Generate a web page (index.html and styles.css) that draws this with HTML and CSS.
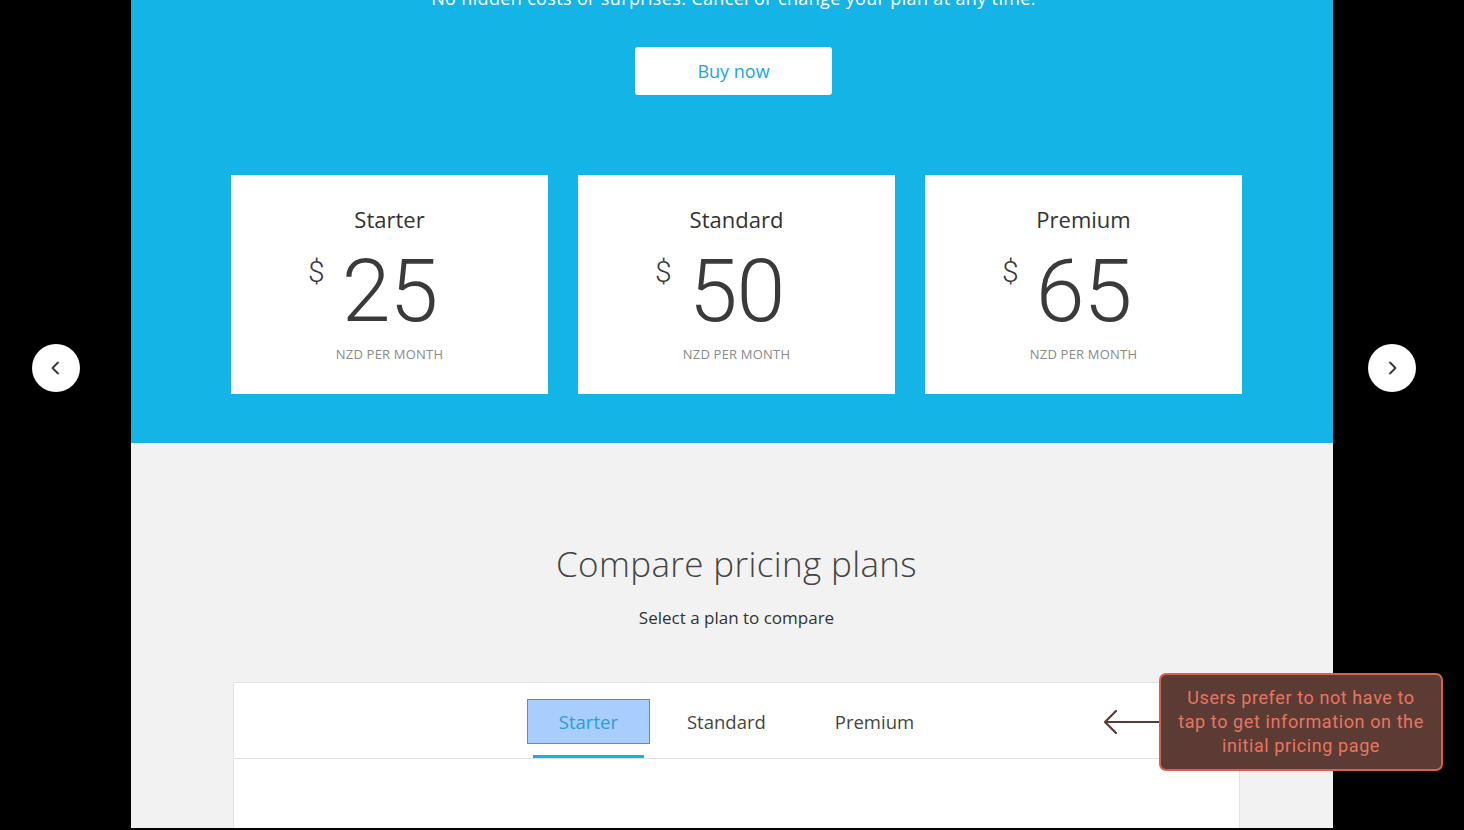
FILE: index.html
```html
<!DOCTYPE html>
<html lang="en">
<head>
<meta charset="utf-8">
<title>Pricing</title>
<link rel="stylesheet" href="styles.css">
</head>
<body>
<div class="frame">
  <div class="side side-left">
    <button class="nav-btn" aria-label="Previous">
      <svg width="16" height="16" viewBox="0 0 16 16"><path d="M10 2.5 L4.5 8 L10 13.5" fill="none" stroke="#333" stroke-width="1.8" stroke-linecap="round" stroke-linejoin="round"/></svg>
    </button>
  </div>

  <main class="page">
    <section class="hero">
      <p class="hero-text">No hidden costs or surprises. Cancel or change your plan at any time.</p>
      <a class="buy-btn" href="#">Buy now</a>
      <div class="plans">
        <div class="plan">
          <div class="plan-name">Starter</div>
          <div class="plan-price"><span class="amount"><span class="currency">$</span>25</span></div>
          <div class="plan-unit">NZD PER MONTH</div>
        </div>
        <div class="plan">
          <div class="plan-name">Standard</div>
          <div class="plan-price"><span class="amount"><span class="currency">$</span>50</span></div>
          <div class="plan-unit">NZD PER MONTH</div>
        </div>
        <div class="plan">
          <div class="plan-name">Premium</div>
          <div class="plan-price"><span class="amount"><span class="currency">$</span>65</span></div>
          <div class="plan-unit">NZD PER MONTH</div>
        </div>
      </div>
    </section>

    <section class="compare">
      <h2 class="compare-title">Compare pricing plans</h2>
      <p class="compare-sub">Select a plan to compare</p>
      <div class="compare-card">
        <div class="tabs">
          <div class="tab active"><span class="tab-label">Starter</span><span class="tab-bar"></span></div>
          <div class="tab"><span class="tab-label">Standard</span><span class="tab-bar"></span></div>
          <div class="tab"><span class="tab-label">Premium</span><span class="tab-bar"></span></div>
        </div>
        <div class="compare-body"></div>
      </div>
    </section>
  </main>

  <div class="side side-right">
    <button class="nav-btn" aria-label="Next">
      <svg width="16" height="16" viewBox="0 0 16 16"><path d="M6 2.5 L11.5 8 L6 13.5" fill="none" stroke="#333" stroke-width="1.8" stroke-linecap="round" stroke-linejoin="round"/></svg>
    </button>
  </div>

  <div class="note">
    <svg class="note-arrow" width="58" height="26" viewBox="0 0 58 26"><path d="M2 13 H57 M13 2 L2 13 L13 24" fill="none" stroke="#5b3a33" stroke-width="2.2" stroke-linecap="round" stroke-linejoin="round"/></svg>
    <div class="note-box">Users prefer to not have to<br>tap to get information on the<br>initial pricing page</div>
  </div>
</div>
</body>
</html>
```

FILE: styles.css
```css
* { box-sizing: border-box; }

html, body {
  margin: 0;
  padding: 0;
  background: #000;
  height: 830px;
  overflow: hidden;
}

body {
  font-family: "Open Sans", "Liberation Sans", sans-serif;
  color: #333;
}

.frame {
  position: relative;
  display: flex;
  height: 828px;
  overflow: hidden;
}

.side {
  width: 131px;
  flex: 0 0 131px;
  padding-top: 344px;
}

.side-left { padding-left: 32px; }
.side-right { padding-left: 35px; }

.nav-btn {
  width: 48px;
  height: 48px;
  border-radius: 50%;
  border: none;
  background: #fff;
  display: flex;
  align-items: center;
  justify-content: center;
  padding: 0;
}

.page {
  width: 1202px;
  flex: 0 0 1202px;
  background: #f2f2f2;
  overflow: hidden;
}

.hero {
  background: #14b4e7;
  height: 443px;
  display: flex;
  flex-direction: column;
  align-items: center;
  padding-left: 3px;
}

.hero-text {
  margin: -14px 0 0;
  font-size: 18px;
  line-height: 24px;
  letter-spacing: 0.35px;
  color: #fff;
  white-space: nowrap;
}

.buy-btn {
  margin-top: 37px;
  width: 197px;
  height: 48px;
  background: #fff;
  border-radius: 3px;
  display: flex;
  align-items: center;
  justify-content: center;
  color: #1ba6de;
  font-size: 18px;
  padding-bottom: 1px;
  text-decoration: none;
}

.plans {
  align-self: flex-start;
  margin: 80px 0 0 97px;
  display: flex;
  gap: 30px;
}

.plan {
  width: 317px;
  height: 219px;
  background: #fff;
  display: flex;
  flex-direction: column;
  align-items: center;
  padding-top: 29px;
}

.plan-name {
  font-size: 22px;
  line-height: 30px;
  color: #333;
}

.plan-price {
  margin-top: 13px;
  height: 88px;
  display: flex;
  justify-content: center;
}

.amount {
  position: relative;
  font-family: Roboto, "Liberation Sans", sans-serif;
  font-weight: 300;
  font-size: 88px;
  line-height: 88px;
  color: #3a3a3a;
  letter-spacing: -1px;
}

.currency {
  position: absolute;
  right: 100%;
  margin-right: 17px;
  top: 10px;
  font-size: 30px;
  line-height: 30px;
  letter-spacing: 0;
}

.plan-unit {
  margin-top: 10px;
  font-size: 13px;
  line-height: 18px;
  color: #8a8a8a;
  letter-spacing: 0.2px;
}

.compare {
  display: flex;
  flex-direction: column;
  align-items: center;
  padding-top: 99px;
  padding-left: 9px;
}

.compare-title {
  margin: 0;
  font-size: 35px;
  line-height: 44px;
  font-weight: 300;
  letter-spacing: 0.35px;
  color: #444;
}

.compare-sub {
  margin: 20px 0 0;
  font-size: 17px;
  line-height: 24px;
  color: #333;
}

.compare-card {
  align-self: flex-start;
  margin: 52px 0 0 93px;
  width: 1007px;
  background: #fff;
  border: 1px solid #e2e2e2;
}

.tabs {
  display: flex;
  justify-content: center;
  gap: 5px;
  padding-top: 16px;
  border-bottom: 1px solid #e0e0e0;
}

.tab {
  display: flex;
  flex-direction: column;
}

.tab-label {
  height: 45px;
  padding: 0 31px;
  display: flex;
  align-items: center;
  font-size: 18.5px;
  color: #444;
  border: 1px solid transparent;
}

.tab-bar {
  margin: 11px 6px 0;
  height: 3px;
}

.tab.active .tab-label {
  background: #a7cefc;
  border-color: #4b8fe2;
  color: #2c9ae0;
}

.tab.active .tab-bar {
  background: #16b1e3;
}

.compare-body {
  height: 120px;
}

.note {
  position: absolute;
  left: 1103px;
  top: 673px;
  display: flex;
  align-items: center;
}

.note-arrow {
  margin-right: -2px;
}

.note-box {
  width: 284px;
  height: 98px;
  background: #5c3b34;
  border: 2px solid #d8614d;
  border-radius: 7px;
  display: flex;
  align-items: center;
  justify-content: center;
  text-align: center;
  padding: 0 8px;
  font-family: Roboto, "Open Sans", sans-serif;
  font-size: 18px;
  line-height: 24px;
  letter-spacing: 0.6px;
  color: #e87562;
}
```
